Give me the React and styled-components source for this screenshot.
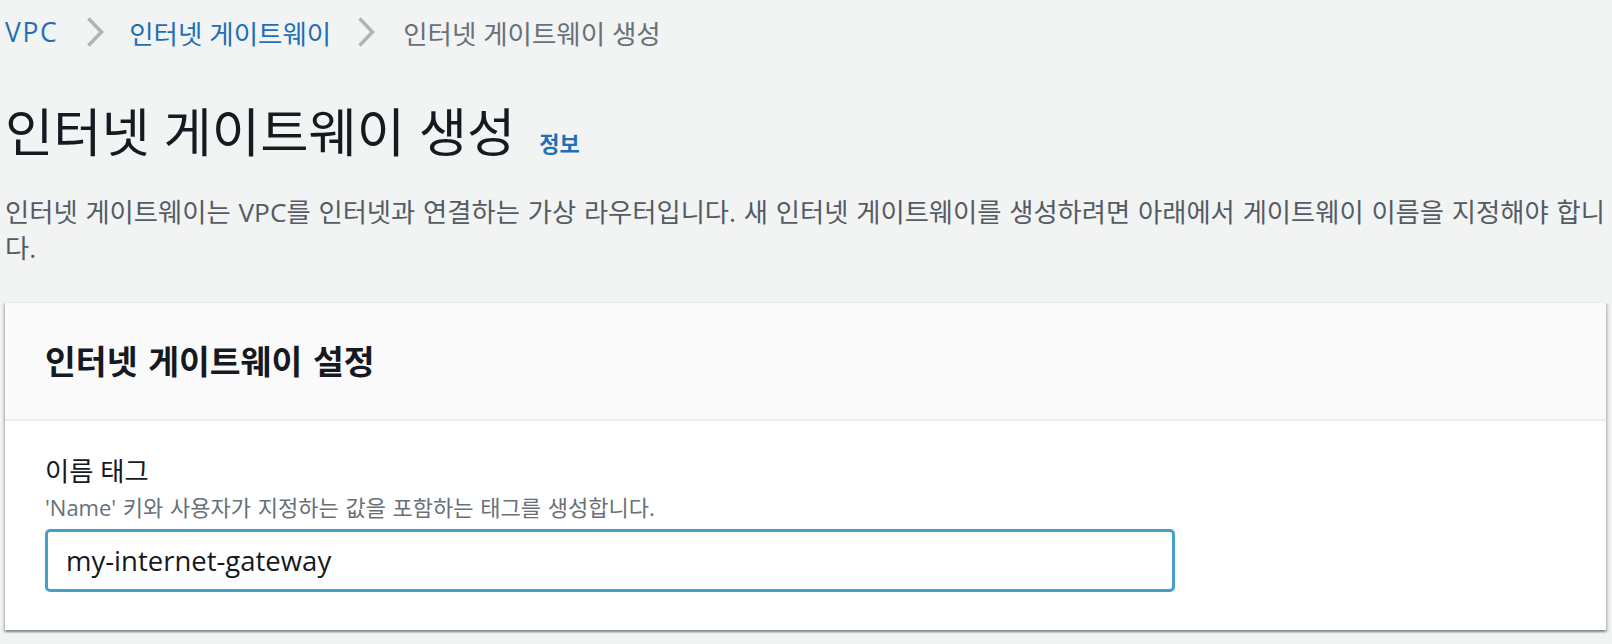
import React from 'react'
import styled, { createGlobalStyle } from 'styled-components'

const GlobalStyle = createGlobalStyle`
  html, body {
    margin: 0;
    padding: 0;
    background: #f2f3f3;
  }
  body {
    font-family: 'Open Sans', 'Noto Sans CJK KR', sans-serif;
    color: #16191f;
  }
`

const Page = styled.div`
  padding: 12px 6px 12px 5px;
`

const Breadcrumbs = styled.nav`
  display: flex;
  align-items: center;
  height: 40px;
  font-size: 26.5px;
`

const Crumb = styled.span`
  color: ${(p) => (p.$current ? '#687078' : '#1f6fb6')};
  letter-spacing: ${(p) => (p.$latin ? '1.6px' : '0')};
  white-space: nowrap;
`

const Chevron = styled.svg`
  width: 18px;
  height: 30px;
  margin: 0 ${(p) => (p.$wide ? 28 : 25)}px 0 ${(p) => (p.$wide ? 26 : 28)}px;
  flex: none;
`

const TitleRow = styled.div`
  display: flex;
  align-items: baseline;
  margin-top: 48px;
`

const Title = styled.h1`
  margin: 0;
  font-size: 52.5px;
  line-height: 64px;
  font-weight: 400;
`

const InfoLink = styled.a`
  margin-left: 24px;
  font-size: 22px;
  font-weight: 700;
  color: #1f6fb6;
  text-decoration: none;
`

const Description = styled.p`
  margin: 30px 0 0;
  font-size: 26.3px;
  line-height: 36px;
  word-spacing: 1px;
  color: #545b64;
`

const Card = styled.section`
  margin-top: 36px;
  background: #fff;
  border-top: 1px solid #eaeded;
  box-shadow: 0 2px 2px rgba(0, 28, 36, 0.3), 2px 2px 2px rgba(0, 28, 36, 0.15),
    -2px 2px 2px rgba(0, 28, 36, 0.15);
`

const CardHeader = styled.header`
  background: #fafafa;
  border-bottom: 2px solid #eaeded;
  padding: 36px 40px 36px;
`

const CardTitle = styled.h2`
  margin: 0;
  font-size: 33.5px;
  line-height: 44px;
  font-weight: 700;
  word-spacing: 2px;
`

const CardBody = styled.div`
  padding: 33px 40px 38px;
`

const Label = styled.label`
  display: block;
  font-size: 26.3px;
  line-height: 34px;
`

const Hint = styled.div`
  margin-top: 4px;
  font-size: 22px;
  line-height: 30px;
  word-spacing: 1px;
  color: #687078;
`

const Input = styled.input`
  display: block;
  box-sizing: border-box;
  width: 1130px;
  height: 63px;
  margin-top: 7px;
  padding: 0 18px;
  border: 3px solid #44a0c8;
  border-radius: 5px;
  outline: none;
  background: #fff;
  font-family: 'Open Sans', 'Noto Sans CJK KR', sans-serif;
  font-size: 27.5px;
  color: #16191f;
`

const ChevronIcon = ({ wide }) => (
  <Chevron $wide={wide} viewBox="0 0 18 30">
    <path d="M2.5 1.5 L15.5 15 L2.5 28.5" fill="none" stroke="#aab7b8" strokeWidth="3.5" />
  </Chevron>
)

export default function App() {
  return (
    <>
      <GlobalStyle />
      <Page>
        <Breadcrumbs>
          <Crumb $latin>VPC</Crumb>
          <ChevronIcon />
          <Crumb>인터넷 게이트웨이</Crumb>
          <ChevronIcon wide />
          <Crumb $current>인터넷 게이트웨이 생성</Crumb>
        </Breadcrumbs>

        <TitleRow>
          <Title>인터넷 게이트웨이 생성</Title>
          <InfoLink href="#">정보</InfoLink>
        </TitleRow>

        <Description>
          인터넷 게이트웨이는 VPC를 인터넷과 연결하는 가상 라우터입니다. 새 인터넷 게이트웨이를 생성하려면 아래에서
          게이트웨이 이름을 지정해야 합니다.
        </Description>

        <Card>
          <CardHeader>
            <CardTitle>인터넷 게이트웨이 설정</CardTitle>
          </CardHeader>
          <CardBody>
            <Label htmlFor="name-tag">이름 태그</Label>
            <Hint>'Name' 키와 사용자가 지정하는 값을 포함하는 태그를 생성합니다.</Hint>
            <Input id="name-tag" defaultValue="my-internet-gateway" />
          </CardBody>
        </Card>
      </Page>
    </>
  )
}
